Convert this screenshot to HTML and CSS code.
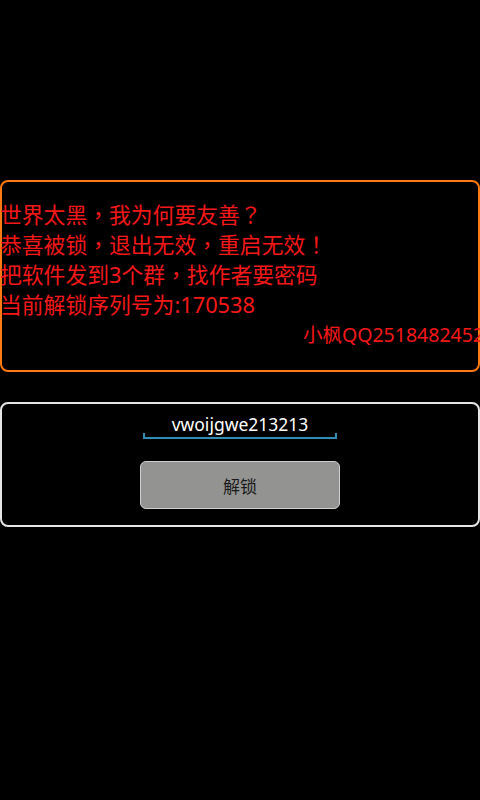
FILE: index.html
```html
<!DOCTYPE html>
<html lang="zh-CN">
<head>
<meta charset="utf-8">
<link rel="stylesheet" href="styles.css">
</head>
<body>
<div class="screen">
  <div class="notice">
    <p class="line">世界太黑<span class="p" lang="zh-Hant">，</span>我为何要友善<span class="p" lang="zh-Hant">？</span></p>
    <p class="line">恭喜被锁<span class="p" lang="zh-Hant">，</span>退出无效<span class="p" lang="zh-Hant">，</span>重启无效<span class="p" lang="zh-Hant">！</span></p>
    <p class="line">把软件发到3个群<span class="p" lang="zh-Hant">，</span>找作者要密码</p>
    <p class="line">当前解锁序列号为:170538</p>
    <p class="author">小枫QQ2518482452</p>
  </div>
  <div class="unlock">
    <div class="field">
      <span class="value">vwoijgwe213213</span>
    </div>
    <button class="btn">解锁</button>
  </div>
</div>
</body>
</html>
```
FILE: styles.css
```css
html, body {
  margin: 0;
  padding: 0;
  background: #000;
  width: 480px;
  height: 800px;
  overflow: hidden;
}
.screen {
  font-family: "Noto Sans", "Noto Sans CJK SC", sans-serif;
  padding-top: 180px;
}
.notice {
  border: 2px solid #ff7a12;
  border-radius: 8px;
  height: 192px;
  box-sizing: border-box;
  padding-top: 18px;
  color: #f41818;
}
.line {
  margin: 0 0 0 -2px;
  font-size: 21.8px;
  line-height: 30px;
  height: 30px;
  white-space: nowrap;
  text-spacing-trim: space-all;
}
.p {
  font-family: "Noto Sans CJK TC", sans-serif;
  line-height: 1;
}
.author {
  margin: 2px -6px 0 0;
  font-size: 19.5px;
  line-height: 26px;
  height: 26px;
  text-align: right;
  white-space: nowrap;
}
.unlock {
  margin-top: 30px;
  border: 2px solid #e6e6e6;
  border-radius: 8px;
  height: 125px;
  box-sizing: border-box;
  display: flex;
  flex-direction: column;
  align-items: center;
  padding-top: 8px;
}
.field {
  width: 194px;
  height: 25px;
  display: flex;
  justify-content: center;
  position: relative;
  border-bottom: 2px solid #2e8db3;
}
.field::before, .field::after {
  content: "";
  position: absolute;
  bottom: 0;
  width: 2px;
  height: 4px;
  background: #2e8db3;
}
.field::before { left: 0; }
.field::after { right: 0; }
.value {
  color: #fff;
  font-size: 17.5px;
  line-height: 24px;
}
.btn {
  margin-top: 22px;
  width: 200px;
  height: 48px;
  background: #939492;
  border: 1px solid #d0d0d0;
  border-radius: 6px;
  color: #1a1a1a;
  font-family: "Noto Sans CJK SC", sans-serif;
  font-size: 17px;
  padding: 0;
}
```
